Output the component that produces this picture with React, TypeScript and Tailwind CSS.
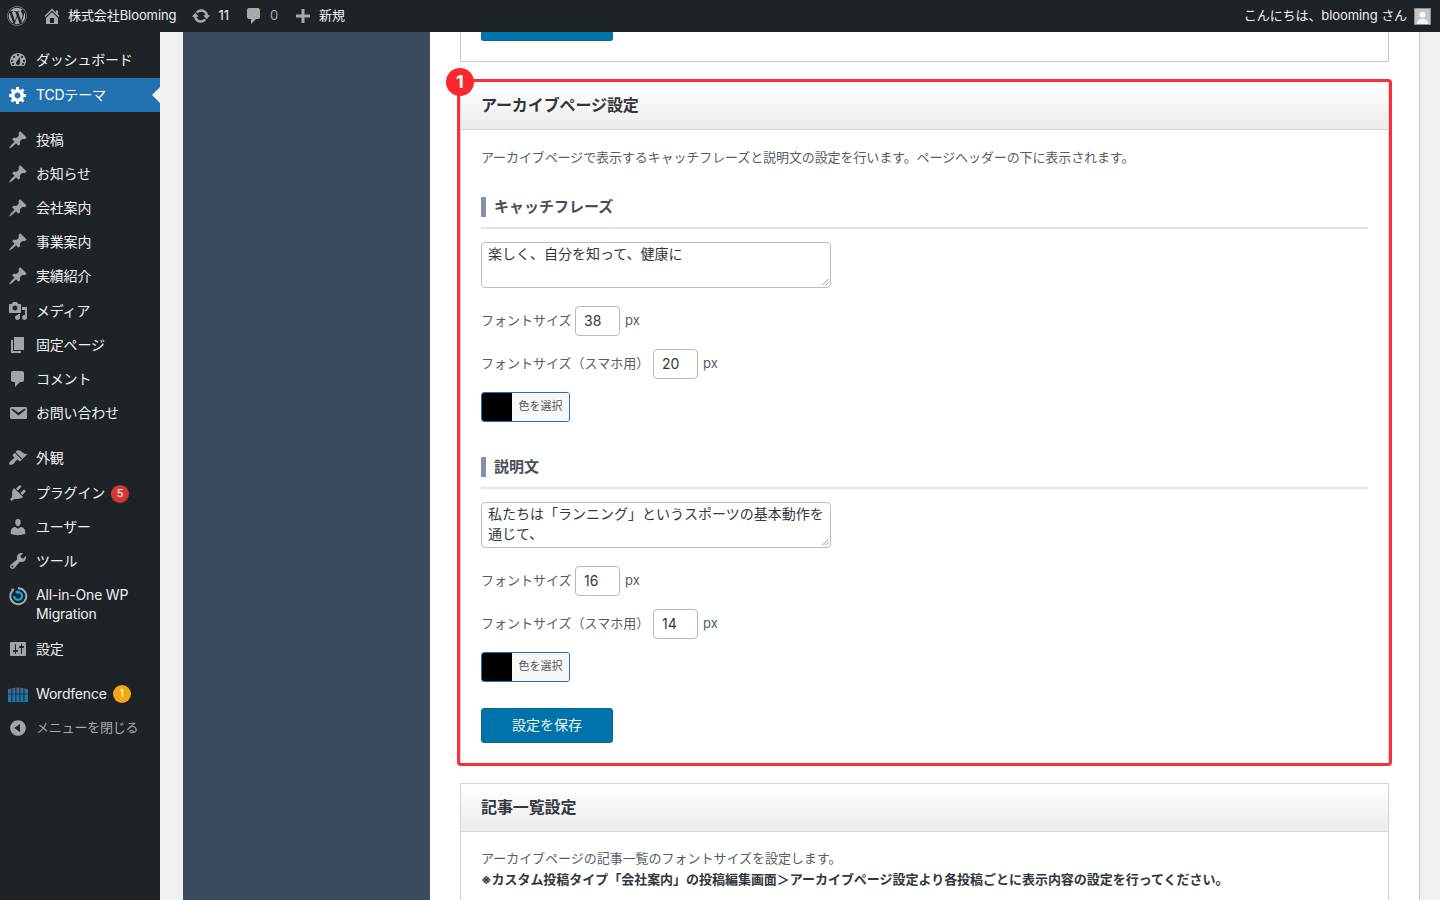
import { FC, ReactNode } from 'react'
import { FaWordpress } from 'react-icons/fa'

const paths = {
  dashboard:
    'M3.76 16h12.48c1.1-1.37 1.76-3.11 1.76-5 0-4.42-3.58-8-8-8s-8 3.58-8 8c0 1.89.66 3.63 1.76 5zM10 4c.55 0 1 .45 1 1s-.45 1-1 1-1-.45-1-1 .45-1 1-1zM6 6c.55 0 1 .45 1 1s-.45 1-1 1-1-.45-1-1 .45-1 1-1zm8 0c.55 0 1 .45 1 1s-.45 1-1 1-1-.45-1-1 .45-1 1-1zm-5.37 5.55L12 7v6c0 1.1-.9 2-2 2s-2-.9-2-2c0-.57.24-1.08.63-1.45zM4 10c.55 0 1 .45 1 1s-.45 1-1 1-1-.45-1-1 .45-1 1-1zm12 0c.55 0 1 .45 1 1s-.45 1-1 1-1-.45-1-1 .45-1 1-1zM5 13c.55 0 1 .45 1 1s-.45 1-1 1-1-.45-1-1 .45-1 1-1zm10 0c.55 0 1 .45 1 1s-.45 1-1 1-1-.45-1-1 .45-1 1-1z',
  gear: 'M18 12h-2.18c-.17.7-.44 1.35-.81 1.93l1.54 1.54-2.1 2.1-1.54-1.54c-.58.36-1.23.63-1.91.79V19H8v-2.18c-.68-.16-1.33-.43-1.91-.79l-1.54 1.54-2.12-2.12 1.54-1.54c-.36-.58-.63-1.23-.79-1.91H1V9.03h2.17c.16-.7.44-1.35.8-1.94L2.43 5.55l2.1-2.1 1.54 1.54c.58-.37 1.24-.64 1.93-.81V2h3v2.18c.68.16 1.33.43 1.91.79l1.54-1.54 2.12 2.12-1.54 1.54c.36.59.64 1.24.8 1.94H18V12zm-8.5 1.5c1.66 0 3-1.34 3-3s-1.34-3-3-3-3 1.34-3 3 1.34 3 3 3z',
  pin: 'M10.44 3.02l1.82-1.82 6.36 6.35-1.83 1.82c-1.05-.68-2.48-.57-3.41.36l-.75.75c-.92.93-1.04 2.35-.35 3.41l-1.83 1.82-2.41-2.41-2.8 2.79c-.42.42-3.38 2.71-3.8 2.29s1.86-3.39 2.28-3.81l2.79-2.79L4.1 9.36l1.83-1.82c1.05.69 2.48.57 3.4-.36l.75-.75c.93-.92 1.05-2.35.36-3.41z',
  media:
    'M13 11V4c0-.55-.45-1-1-1h-1.67L9 1H5L3.67 3H2c-.55 0-1 .45-1 1v7c0 .55.45 1 1 1h10c.55 0 1-.45 1-1zM7 4.5c1.38 0 2.5 1.12 2.5 2.5S8.38 9.5 7 9.5 4.5 8.38 4.5 7 5.62 4.5 7 4.5zM14 6h5v10.5c0 1.38-1.12 2.5-2.5 2.5S14 17.88 14 16.5s1.12-2.5 2.5-2.5c.17 0 .34.02.5.05V9h-3V6zm-4 8.05V13h2v3.5c0 1.38-1.12 2.5-2.5 2.5S7 17.88 7 16.5 8.12 14 9.5 14c.17 0 .34.02.5.05z',
  page: 'M6 15V2h10v13H6zm-1 1h8v2H3V5h2v11z',
  comment: 'M5 2h9c1.1 0 2 .9 2 2v7c0 1.1-.9 2-2 2h-2l-5 5v-5H5c-1.1 0-2-.9-2-2V4c0-1.1.9-2 2-2z',
  mail: 'M3.87 4h13.25C18.37 4 19 4.59 19 5.79v8.42c0 1.19-.63 1.79-1.88 1.79H3.87c-1.25 0-1.88-.6-1.88-1.79V5.79c0-1.2.63-1.79 1.88-1.79zm6.62 8.6l6.74-5.53c.24-.2.43-.66.13-1.07-.29-.41-.82-.42-1.17-.17l-5.7 3.86L4.8 5.83c-.35-.25-.88-.24-1.17.17-.3.41-.11.87.13 1.07z',
  brush:
    'M14.48 11.06L7.41 3.99l1.5-1.5c.5-.56 2.3-.47 3.51.32 1.21.8 1.43 1.28 2.91 2.1 1.18.64 2.45 1.26 4.45.85zm-.71.71L6.7 4.7 4.93 6.47c-.39.39-.39 1.02 0 1.41l1.06 1.06c.39.39.39 1.03 0 1.42-.6.6-1.43 1.11-2.21 1.69-.35.26-.7.53-1.01.84C1.43 13.23.78 15.78 1.5 16.5c.72.72 3.27.07 4.61-1.27.31-.31.58-.66.84-1.01.58-.78 1.09-1.61 1.69-2.21.39-.39 1.03-.39 1.42 0l1.06 1.06c.39.39 1.02.39 1.41 0z',
  plug: 'M13.11 4.36L9.87 7.6 8 5.73l3.24-3.24c.35-.34 1.05-.2 1.56.32.52.51.66 1.21.31 1.55zm-8 1.77l.91-1.12 9.01 9.01-1.19.84c-.71.71-2.63 1.16-3.82 1.16H6.14L4.9 17.26c-.59.59-1.54.59-2.12 0-.59-.58-.59-1.53 0-2.12l1.24-1.24v-3.88c0-1.13.4-3.19 1.09-3.89zm7.26 3.97l3.24-3.24c.34-.35 1.04-.21 1.55.31.52.51.66 1.21.31 1.55l-3.24 3.25z',
  user: 'M10 9.25c-2.27 0-2.73-3.44-2.73-3.44C7 4.02 7.82 2 9.97 2c2.16 0 2.98 2.02 2.71 3.81 0 0-.41 3.44-2.68 3.44zm0 2.57L12.72 10c2.39 0 4.52 2.33 4.52 4.53v2.49s-3.65 1.13-7.24 1.13c-3.65 0-7.24-1.13-7.24-1.13v-2.49c0-2.25 1.94-4.48 4.47-4.48z',
  tool: 'M16.68 9.77c-1.34 1.34-3.3 1.67-4.95.99l-5.41 6.52c-.99.99-2.59.99-3.58 0s-.99-2.59 0-3.57l6.52-5.42c-.68-1.65-.35-3.61.99-4.95 1.28-1.28 3.12-1.62 4.72-1.06l-2.89 2.89 2.82 2.82 2.86-2.87c.53 1.58.18 3.39-1.08 4.65zM3.81 16.21c.4.39 1.04.39 1.43 0 .4-.4.4-1.04 0-1.43-.39-.4-1.03-.4-1.43 0-.39.39-.39 1.03 0 1.43z',
  sliders:
    'M18 16V4c0-.55-.45-1-1-1H3c-.55 0-1 .45-1 1v12c0 .55.45 1 1 1h14c.55 0 1-.45 1-1zM8 11h1c.55 0 1 .45 1 1s-.45 1-1 1H8v1.5c0 .28-.22.5-.5.5s-.5-.22-.5-.5V13H6c-.55 0-1-.45-1-1s.45-1 1-1h1V5.5c0-.28.22-.5.5-.5s.5.22.5.5V11zm5-2h-1c-.55 0-1-.45-1-1s.45-1 1-1h1V5.5c0-.28.22-.5.5-.5s.5.22.5.5V7h1c.55 0 1 .45 1 1s-.45 1-1 1h-1v5.5c0 .28-.22.5-.5.5s-.5-.22-.5-.5V9z',
  collapse: 'M10 2.16c4.33 0 7.84 3.51 7.84 7.84s-3.51 7.84-7.84 7.84S2.16 14.33 2.16 10 5.71 2.16 10 2.16zm2 11.72V6.12L6.18 9.97z',
  home: 'M16 8.5l1.53 1.53-1.06 1.06L10 4.62l-6.47 6.47-1.06-1.06L10 2.5l4 4v-2h2v4zm-6-2.46l6 5.99V18H4v-5.97zM12 17v-5H8v5h4z',
  update:
    'M10.2 3.28c3.53 0 6.43 2.61 6.92 6h2.08l-3.5 4-3.5-4h2.32c-.45-1.97-2.21-3.45-4.32-3.45-1.45 0-2.73.71-3.54 1.78L4.95 5.66C6.23 4.2 8.11 3.28 10.2 3.28zm-.4 13.44c-3.52 0-6.43-2.61-6.92-6H.8l3.5-4c1.17 1.33 2.33 2.67 3.5 4H5.48c.45 1.97 2.21 3.45 4.32 3.45 1.45 0 2.73-.71 3.54-1.78l1.71 1.95c-1.28 1.46-3.15 2.38-5.25 2.38z',
  plus: 'M17 8.5v3h-5.5V17h-3v-5.5H3v-3h5.5V3h3v5.5z',
}

const Dash: FC<{ d: string; className?: string }> = ({ d, className = '' }) => (
  <svg viewBox="0 0 20 20" fill="currentColor" className={className}>
    <path d={d} />
  </svg>
)

const MigrationIcon = () => (
  <svg viewBox="0 0 20 20" className="w-5 h-5" fill="none">
    <path d="M4.2 5A8 8 0 1 0 10 2.2" stroke="#a7aaad" strokeWidth="2" />
    <path d="M3 2.5l3.5.5-1.5 3.5z" fill="#a7aaad" />
    <path d="M6.2 10a3.9 3.9 0 1 0 3.9-3.9" stroke="#00aeef" strokeWidth="2.2" />
    <path d="M10.2 3.8v4.6L7 6.1z" fill="#00aeef" />
  </svg>
)

const WordfenceIcon = () => (
  <svg viewBox="0 0 20 16" className="w-5 h-4">
    <path d="M0 3.5C4 1 16 1 20 3.5V8H0z" fill="#3d6f96" />
    <path d="M0 8h20v8H0z" fill="#1f78ad" />
    <path d="M3.4 2.5h1v13h-1zM7.4 2v13.5h1V2zM11.4 2h1v13.5h-1zM15.4 2.5h1v13h-1z" fill="#1d2327" />
    <path d="M0 7.6h20v.7H0z" fill="#1d2327" />
  </svg>
)

interface MenuItem {
  label: ReactNode
  icon: ReactNode
  rowClass: string
  iconWrap?: string
  badge?: { text: string; className: string }
  dim?: boolean
}

const iconClass = 'w-5 h-5'

const menu: MenuItem[] = [
  { label: 'ダッシュボード', icon: <Dash d={paths.dashboard} className={iconClass} />, rowClass: 'h-[34px] mt-[11px]' },
  { label: '投稿', icon: <Dash d={paths.pin} className={iconClass} />, rowClass: 'h-[34px] mt-[11px]' },
  { label: 'お知らせ', icon: <Dash d={paths.pin} className={iconClass} />, rowClass: 'h-[34px]' },
  { label: '会社案内', icon: <Dash d={paths.pin} className={iconClass} />, rowClass: 'h-[34px]' },
  { label: '事業案内', icon: <Dash d={paths.pin} className={iconClass} />, rowClass: 'h-[34px]' },
  { label: '実績紹介', icon: <Dash d={paths.pin} className={iconClass} />, rowClass: 'h-[34px]' },
  { label: 'メディア', icon: <Dash d={paths.media} className={iconClass} />, rowClass: 'h-[34px] mt-px' },
  { label: '固定ページ', icon: <Dash d={paths.page} className={iconClass} />, rowClass: 'h-[34px]' },
  { label: 'コメント', icon: <Dash d={paths.comment} className={iconClass} />, rowClass: 'h-[34px]' },
  { label: 'お問い合わせ', icon: <Dash d={paths.mail} className={iconClass} />, rowClass: 'h-[34px]' },
  { label: '外観', icon: <Dash d={paths.brush} className={iconClass} />, rowClass: 'h-[34px] mt-[11px]' },
  {
    label: 'プラグイン',
    icon: <Dash d={paths.plug} className={iconClass} />,
    rowClass: 'h-[34px] mt-px',
    badge: { text: '5', className: 'bg-[#d63638] text-white mt-px' },
  },
  { label: 'ユーザー', icon: <Dash d={paths.user} className={iconClass} />, rowClass: 'h-[34px]' },
  { label: 'ツール', icon: <Dash d={paths.tool} className={iconClass} />, rowClass: 'h-[34px]' },
  {
    label: (
      <>
        All-in-One WP
        <br />
        Migration
      </>
    ),
    icon: <MigrationIcon />,
    rowClass: 'h-[54px]',
    iconWrap: 'self-start pt-[8px]',
  },
  { label: '設定', icon: <Dash d={paths.sliders} className={iconClass} />, rowClass: 'h-[34px]' },
  {
    label: 'Wordfence',
    icon: <WordfenceIcon />,
    rowClass: 'h-[34px] mt-[11px]',
    badge: { text: '1', className: 'bg-[#f5a80f] text-white' },
  },
  { label: 'メニューを閉じる', icon: <Dash d={paths.collapse} className={iconClass} />, rowClass: 'h-[34px]', dim: true },
]

const MenuRow: FC<{ item: MenuItem }> = ({ item }) => (
  <div className={`flex items-center pl-2 ${item.rowClass}`}>
    <span className={`w-[28px] flex-shrink-0 text-[#a0a5aa] ${item.iconWrap ?? ''}`}>{item.icon}</span>
    <span className={`leading-[19px] mb-[2px] ${item.dim ? 'text-[13px] text-[#a7aaad]' : 'text-[#f0f0f1]'}`}>
      {item.label}
    </span>
    {item.badge && (
      <span
        className={`ml-[6px] w-[18px] h-[18px] rounded-full flex items-center justify-center text-[11px] ${item.badge.className}`}
      >
        {item.badge.text}
      </span>
    )}
  </div>
)

const AdminBar = () => (
  <div className="h-8 flex-shrink-0 bg-[#1d2327] text-[#f0f0f1] text-[13px] tracking-[-0.08px] flex items-center justify-between pl-[7px] pr-[9px]">
    <div className="flex items-center">
      <FaWordpress className="w-5 h-5 text-[#a7aaad]" />
      <Dash d={paths.home} className="w-5 h-5 ml-[15px] text-[#a7aaad]" />
      <span className="ml-[6px]">株式会社Blooming</span>
      <Dash d={paths.update} className="w-5 h-5 ml-[15px] text-[#a7aaad]" />
      <span className="ml-[7px]">11</span>
      <Dash d={paths.comment} className="w-5 h-5 ml-[15px] text-[#a7aaad]" />
      <span className="ml-[6px] text-[#a7aaad]">0</span>
      <Dash d={paths.plus} className="w-5 h-5 ml-[15px] text-[#a7aaad]" />
      <span className="ml-[6px]">新規</span>
    </div>
    <div className="flex items-center">
      <span>こんにちは、blooming さん</span>
      <span className="ml-[7px] w-[17px] h-[17px] border border-[#8c8f94] bg-[#c4c4c4] overflow-hidden flex items-end justify-center">
        <svg viewBox="0 0 16 16" className="w-full h-full" fill="#f5f5f5">
          <circle cx="8" cy="6" r="3.2" />
          <path d="M2 16c0-4 3-5.5 6-5.5s6 1.5 6 5.5z" />
        </svg>
      </span>
    </div>
  </div>
)

const Sidebar = () => (
  <aside className="w-40 flex-shrink-0 bg-[#1d2327] text-sm tracking-[-0.2px]">
    {menu.slice(0, 1).map((item, i) => (
      <MenuRow key={i} item={item} />
    ))}
    <div className="relative mt-px h-[34px] bg-[#2271b1] text-white flex items-center pl-2">
      <Dash d={paths.gear} className="w-5 h-5 mr-2 flex-shrink-0" />
      <span>TCDテーマ</span>
      <span className="absolute right-0 top-[9px] border-y-[8px] border-y-transparent border-r-[8px] border-r-[#f0f0f1]" />
    </div>
    {menu.slice(1).map((item, i) => (
      <MenuRow key={i} item={item} />
    ))}
  </aside>
)

const FontSizeRow: FC<{ label: string; value: string; className: string; labelClass: string }> = ({
  label,
  value,
  className,
  labelClass,
}) => (
  <div className={`flex items-center h-[30px] text-[13px] text-[#555d66] ${className}`}>
    <span className={`whitespace-nowrap ${labelClass}`}>{label}</span>
    <span className="w-[45px] h-[30px] border border-[#b8b8b8] rounded bg-white pl-2 flex items-center text-sm text-[#32373c]">
      {value}
    </span>
    <span className="ml-[5px]">px</span>
  </div>
)

const ColorButton: FC<{ className: string }> = ({ className }) => (
  <div className={`w-[89px] h-[30px] border border-[#2271b1] rounded-[3px] flex overflow-hidden ${className}`}>
    <span className="w-[30px] bg-black" />
    <span className="flex-1 bg-[#f6f7f7] text-[11px] text-[#50575e] flex items-center justify-center">色を選択</span>
  </div>
)

const SubHeading: FC<{ text: string }> = ({ text }) => (
  <div className="border-b-2 border-[#e5e5e5] pb-[10px] flex items-center h-[32px]">
    <span className="w-[5px] h-[20px] bg-[#8490a8]" />
    <span className="ml-2 text-[15px] leading-[20px] font-bold text-[#4a4f57]">{text}</span>
  </div>
)

const TextBox: FC<{ text: string }> = ({ text }) => (
  <div className="relative mt-[12.5px] w-[350px] h-[46px] border border-[#bdbdbd] rounded bg-white px-[6px] pt-px text-sm leading-[20px] text-[#32373c]">
    {text}
    <svg viewBox="0 0 8 8" className="absolute right-px bottom-px w-2 h-2" stroke="#9a9a9a" fill="none">
      <path d="M1 7.5L7.5 1M4.5 7.5L7.5 4.5" />
    </svg>
  </div>
)

const CardHeader: FC<{ title: string }> = ({ title }) => (
  <div className="h-[48px] pb-[2px] border-b border-[#d5d5d5] bg-gradient-to-b from-white to-[#ececec] px-5 flex items-center text-base font-bold text-[#32373c] tracking-[-0.1px]">
    {title}
  </div>
)

const SettingsPanel = () => (
  <div className="flex-1 min-w-0 bg-white border-r border-[#c8c8c8] px-[30px]">
    <div className="h-[30px] border border-t-0 border-[#c8c8c8] pl-5">
      <div className="w-[132px] h-[9px] bg-[#0073aa] border-b border-[#006799] rounded-b-[3px]" />
    </div>

    <div className="relative mt-5 border-x border-[#d5d5d5]">
      <CardHeader title="アーカイブページ設定" />
      <div className="h-[633px] px-5">
        <p className="pt-[17px] pb-px text-[13px] leading-5 tracking-[-0.1px] text-[#555d66]">
          アーカイブページで表示するキャッチフレーズと説明文の設定を行います。ページヘッダーの下に表示されます。
        </p>
        <div className="mt-[29px]">
          <SubHeading text="キャッチフレーズ" />
        </div>
        <TextBox text="楽しく、自分を知って、健康に" />
        <FontSizeRow label="フォントサイズ" value="38" className="mt-[18px]" labelClass="w-[94px]" />
        <FontSizeRow label="フォントサイズ（スマホ用）" value="20" className="mt-[13px]" labelClass="w-[172px]" />
        <ColorButton className="mt-[13px]" />

        <div className="mt-[35.5px]">
          <SubHeading text="説明文" />
        </div>
        <TextBox text="私たちは「ランニング」というスポーツの基本動作を通じて、" />
        <FontSizeRow label="フォントサイズ" value="16" className="mt-[18px]" labelClass="w-[94px]" />
        <FontSizeRow label="フォントサイズ（スマホ用）" value="14" className="mt-[13px]" labelClass="w-[172px]" />
        <ColorButton className="mt-[13px]" />

        <button className="mt-[26.5px] pb-[2px] w-[132px] h-[35px] bg-[#0073aa] border border-[#006799] rounded-[3px] text-sm text-[#f0f5fa] flex items-center justify-center">
          設定を保存
        </button>
      </div>

      {/* red annotation drawn over the card */}
      <div className="absolute -inset-x-[4px] -inset-y-[3px] border-[3px] border-[#f9303a] rounded pointer-events-none" />
      <div className="absolute -left-[15px] -top-[14px] w-7 h-7 rounded-full bg-[#f9282d] text-white font-bold text-lg flex items-center justify-center">
        1
      </div>
    </div>

    <div className="mt-5 border border-[#d5d5d5]">
      <CardHeader title="記事一覧設定" />
      <div className="px-5 pt-[16px] pb-5 text-[13px] leading-[20.5px] tracking-[-0.03px] text-[#555d66]">
        <p>アーカイブページの記事一覧のフォントサイズを設定します。</p>
        <p className="font-bold text-[#32373c]">
          ※カスタム投稿タイプ「会社案内」の投稿編集画面＞アーカイブページ設定より各投稿ごとに表示内容の設定を行ってください。
        </p>
      </div>
    </div>
  </div>
)

export default function App() {
  return (
    <div className="w-[1440px] h-[900px] overflow-hidden flex flex-col bg-[#f0f0f1] font-['Inter','Noto_Sans_CJK_JP',sans-serif]">
      <AdminBar />
      <div className="flex flex-1 min-h-0">
        <Sidebar />
        <div className="w-[23px] flex-shrink-0" />
        <div className="w-[247px] flex-shrink-0 bg-[#3c4a60]" />
        <SettingsPanel />
        <div className="w-5 flex-shrink-0" />
      </div>
    </div>
  )
}
